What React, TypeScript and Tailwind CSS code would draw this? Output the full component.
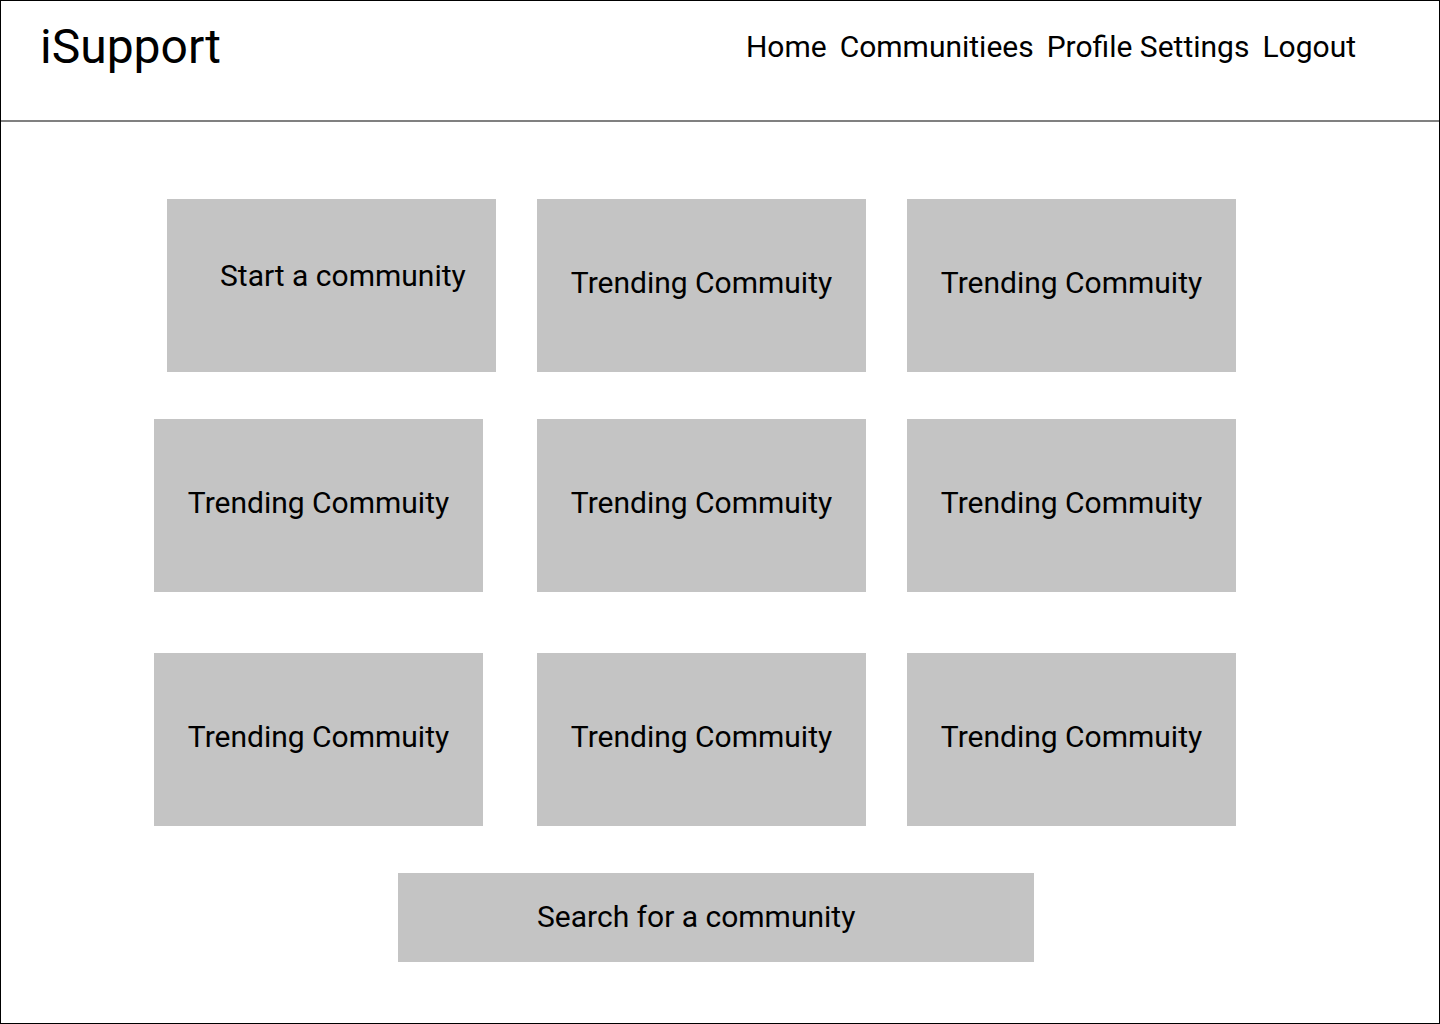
import React from 'react';

const font = { fontFamily: 'Roboto, "Liberation Sans", sans-serif' };

function Card({ label, className }: { label: string; className?: string }) {
  return (
    <div className={`w-[329px] h-[173px] bg-[#c4c4c4] flex items-center justify-center pb-[6px] text-[30px] text-black ${className || ''}`}>
      {label}
    </div>
  );
}

export default function App() {
  return (
    <div style={font} className="w-[1440px] h-[1024px] bg-white border border-black flex flex-col overflow-hidden">
      <header className="h-[121px] shrink-0 flex items-start border-b-2 border-[#808080]">
        <div className="pl-[39px] pt-[18px] text-[48px] leading-[56px] text-black">iSupport</div>
        <nav className="ml-auto mr-[83px] mt-[27px] flex gap-[13px] text-[30px] leading-[38px] text-black">
          <a>Home</a>
          <a>Communitiees</a>
          <a>Profile Settings</a>
          <a>Logout</a>
        </nav>
      </header>

      <main className="flex flex-col">
        <div className="flex mt-[77px] pl-[166px] gap-[41px]">
          <div className="w-[329px] h-[173px] bg-[#c4c4c4] text-[30px] text-black pl-[53px] pt-[54px]">Start a community</div>
          <Card label="Trending Commuity" />
          <Card label="Trending Commuity" />
        </div>
        <div className="flex mt-[47px] pl-[153px]">
          <Card label="Trending Commuity" />
          <Card label="Trending Commuity" className="ml-[54px]" />
          <Card label="Trending Commuity" className="ml-[41px]" />
        </div>
        <div className="flex mt-[61px] pl-[153px]">
          <Card label="Trending Commuity" />
          <Card label="Trending Commuity" className="ml-[54px]" />
          <Card label="Trending Commuity" className="ml-[41px]" />
        </div>
        <div className="mt-[47px] ml-[397px] w-[636px] h-[89px] bg-[#c4c4c4] flex items-center pb-[2px] text-[30px] text-black pl-[139px]">
          Search for a community
        </div>
      </main>
    </div>
  );
}
